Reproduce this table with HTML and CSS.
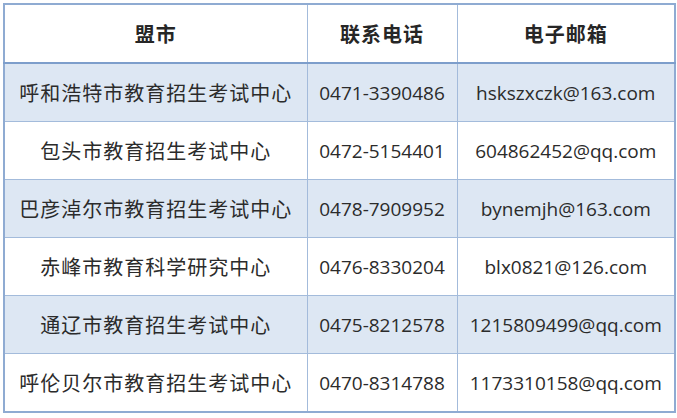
FILE: index.html
```html
<!DOCTYPE html>
<html lang="zh-CN">
<head>
<meta charset="utf-8">
<title>盟市教育招生考试中心联系方式</title>
<link rel="stylesheet" href="styles.css">
</head>
<body>
<table class="contacts">
  <colgroup>
    <col class="c-name">
    <col class="c-tel">
    <col class="c-mail">
  </colgroup>
  <thead>
    <tr class="head">
      <th>盟市</th>
      <th>联系电话</th>
      <th>电子邮箱</th>
    </tr>
  </thead>
  <tbody>
    <tr class="alt"><td class="name">呼和浩特市教育招生考试中心</td><td class="latin">0471-3390486</td><td class="latin">hskszxczk@163.com</td></tr>
    <tr><td class="name">包头市教育招生考试中心</td><td class="latin">0472-5154401</td><td class="latin">604862452@qq.com</td></tr>
    <tr class="alt"><td class="name">巴彦淖尔市教育招生考试中心</td><td class="latin">0478-7909952</td><td class="latin">bynemjh@163.com</td></tr>
    <tr><td class="name">赤峰市教育科学研究中心</td><td class="latin">0476-8330204</td><td class="latin">blx0821@126.com</td></tr>
    <tr class="alt"><td class="name">通辽市教育招生考试中心</td><td class="latin">0475-8212578</td><td class="latin">1215809499@qq.com</td></tr>
    <tr><td class="name">呼伦贝尔市教育招生考试中心</td><td class="latin">0470-8314788</td><td class="latin">1173310158@qq.com</td></tr>
  </tbody>
</table>
</body>
</html>
```
FILE: styles.css
```css
html, body {
  margin: 0;
  padding: 0;
  background: #ffffff;
}

body {
  padding: 3px;
  font-family: "Noto Sans CJK SC", "Noto Sans", sans-serif;
  color: #2b2b2b;
}

.contacts {
  border-collapse: collapse;
  table-layout: fixed;
  width: 671px;
  border: 2px solid #8fabd2;
}

.c-name { width: 303px; }
.c-tel { width: 150px; }
.c-mail { width: 218px; }

.contacts th,
.contacts td {
  border: 1.5px solid #a3bbdb;
  text-align: center;
  vertical-align: middle;
  padding: 0;
  white-space: nowrap;
}

.head th {
  height: 57px;
  font-size: 20px;
  font-weight: 700;
  letter-spacing: 1px;
  color: #262626;
  border-bottom: 2px solid #7d9ecb;
}

.contacts tbody td {
  height: 57px;
}

.alt td {
  background: #dde7f3;
}

.name {
  font-size: 20px;
  letter-spacing: 1px;
}

.latin {
  font-family: "Open Sans", "Noto Sans CJK SC", sans-serif;
  font-size: 19px;
}
```
